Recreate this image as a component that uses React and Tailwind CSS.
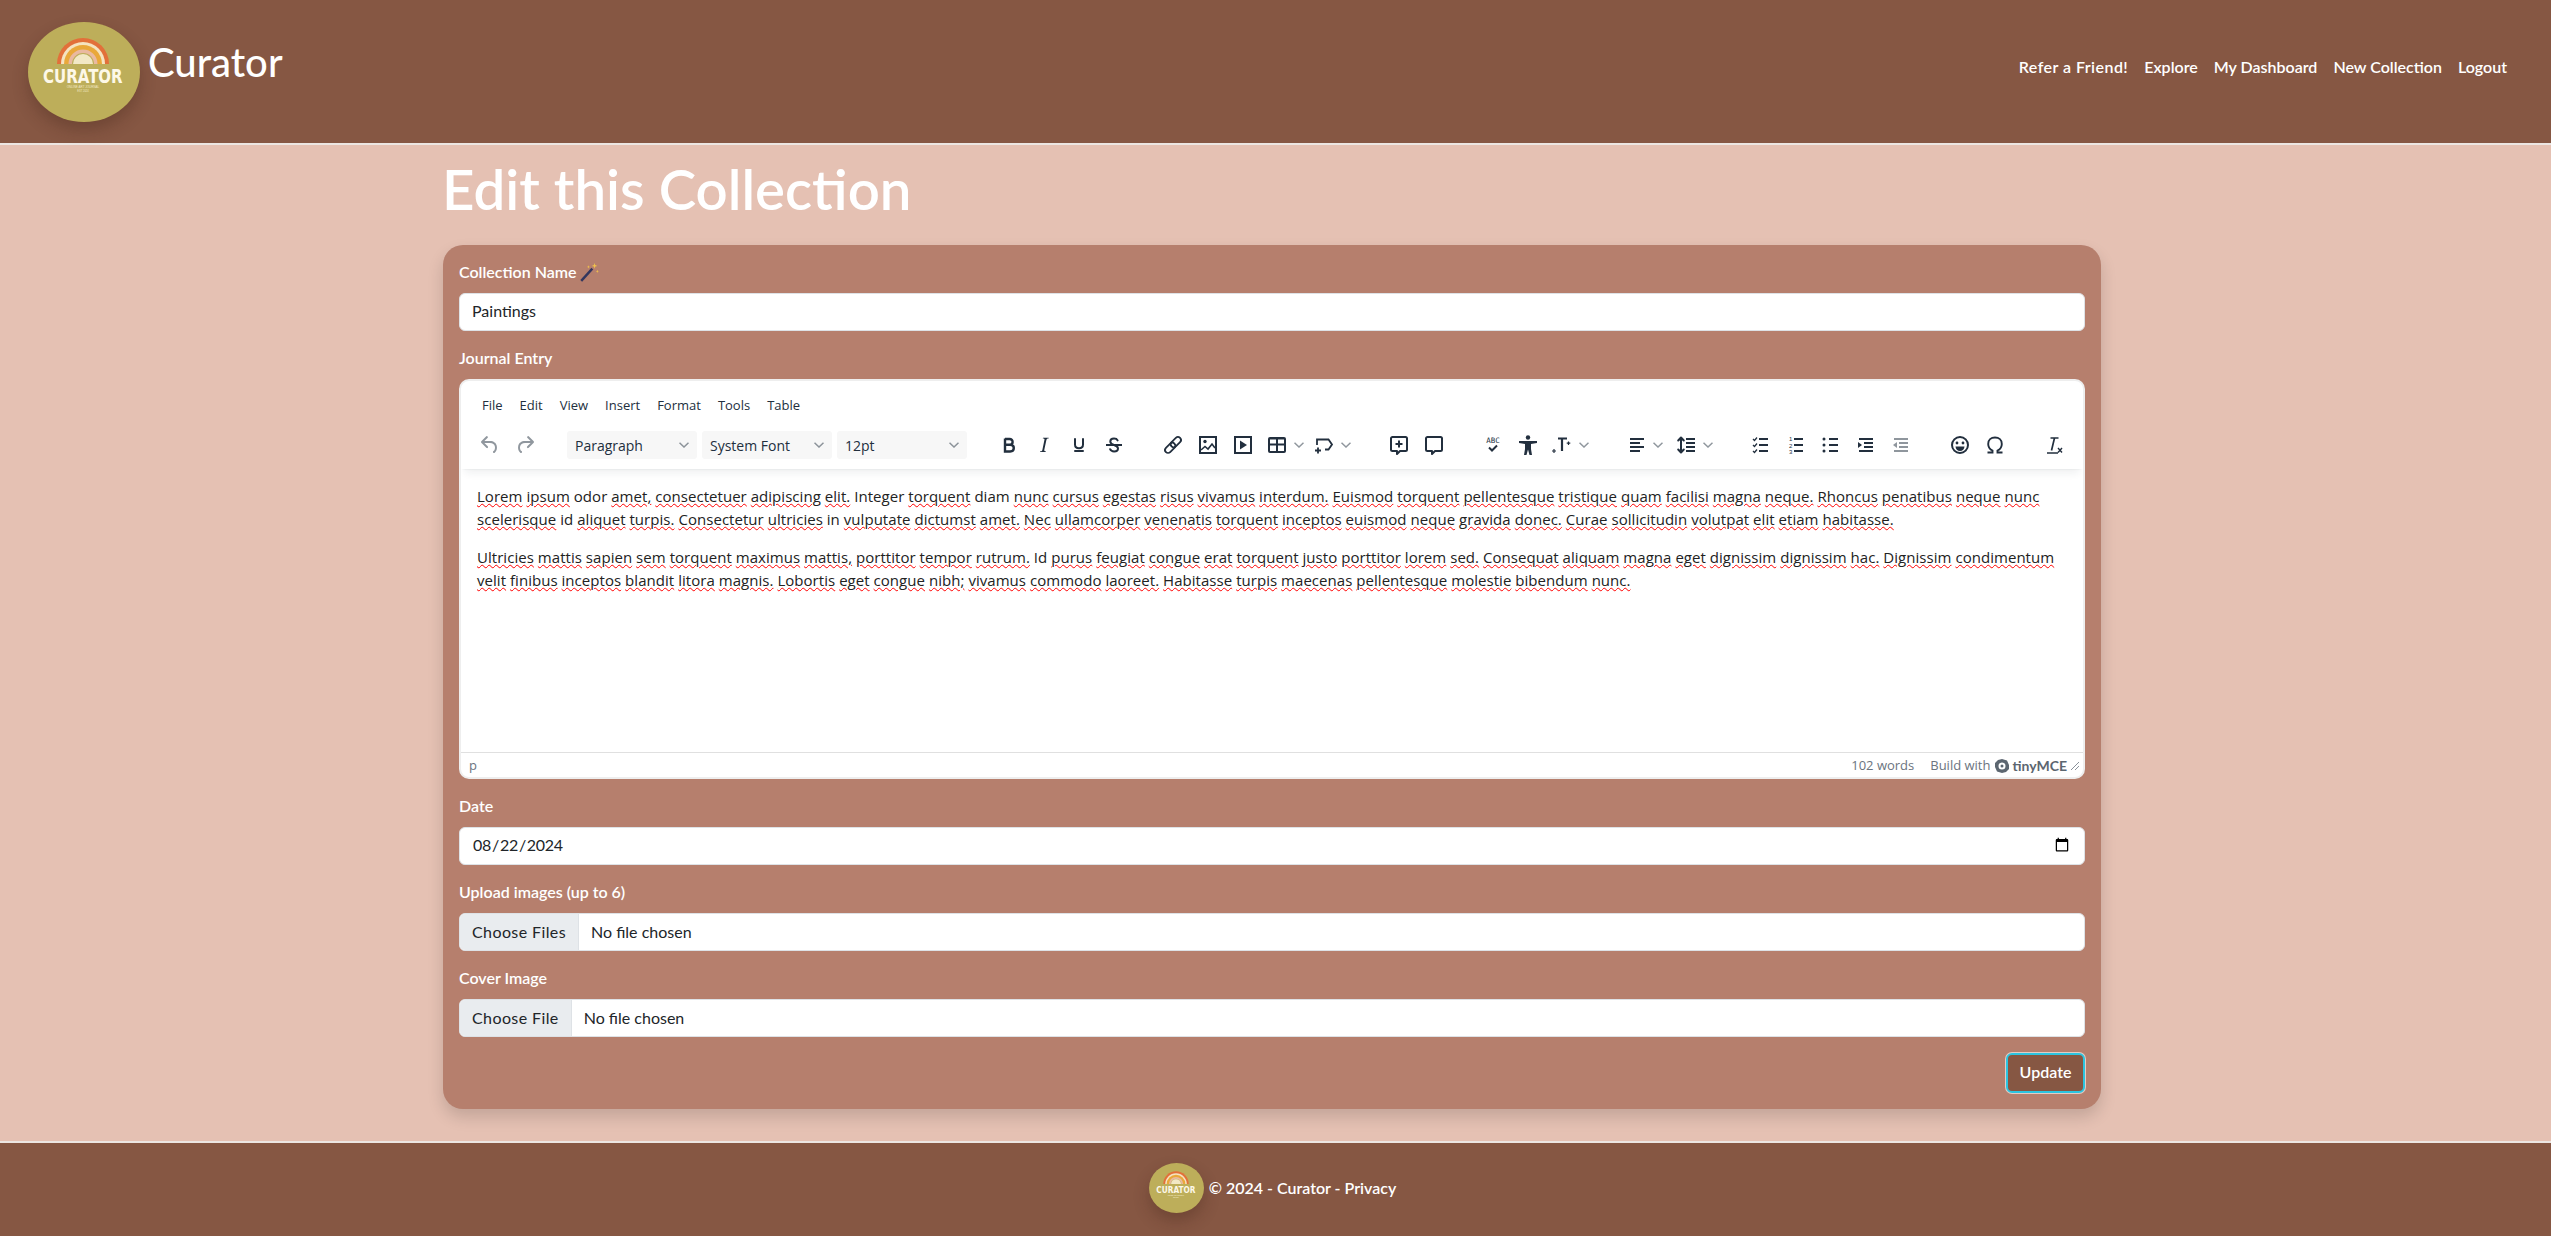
import React from "react";

const cleanWords = ["odor", "Integer", "diam", "id", "in", "Id"];

const paragraphOne = [
	"Lorem ipsum odor amet, consectetuer adipiscing elit. Integer torquent diam nunc cursus egestas risus vivamus interdum. Euismod torquent pellentesque tristique quam facilisi magna neque. Rhoncus penatibus neque nunc",
	"scelerisque id aliquet turpis. Consectetur ultricies in vulputate dictumst amet. Nec ullamcorper venenatis torquent inceptos euismod neque gravida donec. Curae sollicitudin volutpat elit etiam habitasse.",
];
const paragraphTwo = [
	"Ultricies mattis sapien sem torquent maximus mattis, porttitor tempor rutrum. Id purus feugiat congue erat torquent justo porttitor lorem sed. Consequat aliquam magna eget dignissim dignissim hac. Dignissim condimentum",
	"velit finibus inceptos blandit litora magnis. Lobortis eget congue nibh; vivamus commodo laoreet. Habitasse turpis maecenas pellentesque molestie bibendum nunc.",
];

function Logo({ className }) {
	return (
		<div className={"shrink-0 rounded-[50%] bg-[#bdae5a] shadow-[0_8px_16px_rgba(60,30,20,0.3)] " + className}>
			<svg viewBox="0 0 112 100" className="w-full h-full">
				<path d="M29 42a26 26 0 0 1 52 0Z" fill="#e2703a" />
				<path d="M33 42a22 22 0 0 1 44 0Z" fill="#f5e3c0" />
				<path d="M36 42a19 19 0 0 1 38 0Z" fill="#e9a83a" />
				<path d="M40.5 42a14.5 14.5 0 0 1 29 0Z" fill="#eab9a0" />
				<path d="M44 42a11 11 0 0 1 22 0Z" fill="#bdae5a" />
				<path d="M45 42a10 10 0 0 1 20 0Z" fill="#f2e8c5" />
				<text transform="translate(15 61) scale(1 1.3)" fontFamily="'DejaVu Sans', sans-serif" fontWeight="700" fontSize="15" fill="#fdf8e8">
					CURATOR
				</text>
				<text x="55" y="66" textAnchor="middle" fontFamily="'Liberation Sans', sans-serif" fontSize="3" fill="#f2e8c5">
					ONLINE ART JOURNAL
				</text>
				<text x="55" y="70" textAnchor="middle" fontFamily="'Liberation Sans', sans-serif" fontSize="2.6" fill="#f2e8c5">
					EST 2024
				</text>
			</svg>
		</div>
	);
}

function Icon({ children }) {
	return (
		<svg viewBox="0 0 24 24" className="w-6 h-6 text-[#222f3e]" fill="none" stroke="currentColor" strokeWidth="2">
			{children}
		</svg>
	);
}

const icons = {
	undo: (
		<g opacity="0.5">
			<path stroke="none" fill="currentColor" d="M6.4 8H12c3.7 0 6.2 2 6.8 5.1.6 2.7-.4 5.6-2.3 6.8a1 1 0 0 1-1-1.8c1.1-.6 1.8-2.7 1.4-4.6-.5-2.1-2.1-3.5-4.9-3.5H6.4l3.3 3.3a1 1 0 1 1-1.4 1.4l-5-5a1 1 0 0 1 0-1.4l5-5a1 1 0 0 1 1.4 1.4L6.4 8Z" />
		</g>
	),
	redo: (
		<g opacity="0.5">
			<path stroke="none" fill="currentColor" d="M17.6 8H12c-3.7 0-6.2 2-6.8 5.1-.6 2.7.4 5.6 2.3 6.8a1 1 0 0 0 1-1.8c-1.1-.6-1.8-2.7-1.4-4.6.5-2.1 2.1-3.5 4.9-3.5h5.6l-3.3 3.3a1 1 0 1 0 1.4 1.4l5-5a1 1 0 0 0 0-1.4l-5-5a1 1 0 0 0-1.4 1.4L17.6 8Z" />
		</g>
	),
	bold: <path strokeWidth="2.4" d="M8 5.5v13h5.2c2.2 0 3.6-1.3 3.6-3.4 0-2-1.4-3.3-3.6-3.3H8m0 0h4.6c1.9 0 3-1.1 3-2.9 0-1.7-1.1-2.9-3-2.9H8" />,
	italic: <path stroke="none" fill="currentColor" d="M16.7 4.7l-.1.9h-.3c-.6 0-1 0-1.4.3-.3.3-.4.6-.5 1.1l-2.1 9.8v.6c0 .5.4.8 1.4.8h.2l-.2.8H8l.2-.8h.2c1.1 0 1.8-.5 2-1.5l2-9.8.1-.5c0-.6-.4-.8-1.4-.8h-.3l.2-.9h5.8Z" />,
	underline: <path strokeLinecap="round" d="M8 6v5.5c0 2.4 1.7 3.7 4 3.7s4-1.3 4-3.7V6M8 18h8" />,
	strike: (
		<>
			<path strokeLinecap="round" d="M15.6 7.4C15 6.2 13.7 5.6 12 5.6c-2.2 0-3.7 1.1-3.7 2.9 0 1.5 1 2.6 3.7 3.5 3 .9 4 2 4 3.5 0 1.8-1.6 2.9-3.9 2.9-1.9 0-3.4-.8-4-2.2" />
			<path d="M4 12h16" />
		</>
	),
	link: (
		<g transform="rotate(-45 12 12)" strokeWidth="1.8">
			<rect x="2" y="9" width="12" height="6" rx="3" />
			<rect x="10" y="9" width="12" height="6" rx="3" />
		</g>
	),
	image: (
		<>
			<rect x="4" y="4" width="16" height="16" />
			<circle cx="9" cy="8.5" r="1.7" fill="currentColor" stroke="none" />
			<path strokeWidth="1.6" d="M5 17l4-3.5 3 2.5 4-5 3 4" />
		</>
	),
	media: (
		<>
			<rect x="4" y="4" width="16" height="16" />
			<path stroke="none" fill="currentColor" d="M9 7.5l7 4.5-7 4.5Z" />
		</>
	),
	table: (
		<>
			<rect x="3" y="4" width="18" height="16" rx="2" stroke="none" fill="currentColor" />
			<rect x="5" y="6.5" width="6" height="4" fill="#fff" stroke="none" />
			<rect x="13" y="6.5" width="6" height="4" fill="#fff" stroke="none" />
			<rect x="5" y="12.5" width="6" height="5.5" fill="#fff" stroke="none" />
			<rect x="13" y="12.5" width="6" height="5.5" fill="#fff" stroke="none" />
		</>
	),
	template: <path strokeWidth="1.8" d="M5 12V6.5h11.5L20 11.5l-3.5 5H13M3 17.5h6M6 14.5v6" />,
	commentAdd: (
		<>
			<path strokeLinejoin="round" d="M5.5 4h13a1.5 1.5 0 0 1 1.5 1.5v11a1.5 1.5 0 0 1-1.5 1.5H13l-3 3v-3H5.5A1.5 1.5 0 0 1 4 16.5v-11A1.5 1.5 0 0 1 5.5 4Z" />
			<path d="M12 7.5v7M8.5 11h7" />
		</>
	),
	comment: <path strokeLinejoin="round" d="M5.5 4h13a1.5 1.5 0 0 1 1.5 1.5v11a1.5 1.5 0 0 1-1.5 1.5H13l-3 3v-3H5.5A1.5 1.5 0 0 1 4 16.5v-11A1.5 1.5 0 0 1 5.5 4Z" />,
	spell: (
		<>
			<text x="12" y="10" textAnchor="middle" stroke="none" fill="currentColor" fontSize="7.5" fontFamily="'DejaVu Sans Mono', monospace">
				ABC
			</text>
			<path d="M8 14.5l3 3 5-5" />
		</>
	),
	a11y: (
		<>
			<circle cx="12" cy="4.5" r="2.2" fill="currentColor" stroke="none" />
			<path stroke="none" fill="currentColor" d="M3 8h18v2l-6 1v5l1 6h-2.5L12 16.5 10.5 22H8l1-6v-5L3 10Z" />
		</>
	),
	fontsize: (
		<>
			<path strokeWidth="2.2" d="M8 5.5h9M12 5.5V18" />
			<path strokeWidth="1.2" d="M4 16v4M2 18h4M18.5 8.5V12M16.7 10.2h3.6" />
		</>
	),
	align: <path d="M5 6h14M5 10h10M5 14h14M5 18h10" />,
	lineheight: (
		<>
			<path strokeLinecap="round" strokeLinejoin="round" d="M6 5v14M3.2 7.5L6 4.5l2.8 3M3.2 16.5L6 19.5l2.8-3" />
			<path d="M11 6h9M11 10h9M11 14h9M11 18h9" />
		</>
	),
	checklist: (
		<>
			<path d="M11 6h9M11 12h9M11 18h9" />
			<path strokeWidth="1.3" d="M5 6l1.5 1.5L9 4.5M5 12l1.5 1.5 2.5-3M5 18l1.5 1.5 2.5-3" />
		</>
	),
	numlist: (
		<>
			<path d="M11 6h9M11 12h9M11 18h9" />
			<text x="6" y="8" stroke="none" fill="currentColor" fontSize="6" fontFamily="'Liberation Sans', sans-serif">1</text>
			<text x="6" y="14.5" stroke="none" fill="currentColor" fontSize="6" fontFamily="'Liberation Sans', sans-serif">2</text>
			<text x="6" y="21" stroke="none" fill="currentColor" fontSize="6" fontFamily="'Liberation Sans', sans-serif">3</text>
		</>
	),
	bullist: (
		<>
			<path d="M11 6h9M11 12h9M11 18h9" />
			<circle cx="6" cy="6" r="1.5" fill="currentColor" stroke="none" />
			<circle cx="6" cy="12" r="1.5" fill="currentColor" stroke="none" />
			<circle cx="6" cy="18" r="1.5" fill="currentColor" stroke="none" />
		</>
	),
	indent: (
		<>
			<path d="M6 6h14M11 10h9M11 14h9M6 18h14" />
			<path stroke="none" fill="currentColor" d="M5 9l4 3-4 3Z" />
		</>
	),
	outdent: (
		<g opacity="0.5">
			<path d="M6 6h14M11 10h9M11 14h9M6 18h14" />
			<path stroke="none" fill="currentColor" d="M9 9l-4 3 4 3Z" />
		</g>
	),
	emoji: (
		<>
			<circle cx="12" cy="12" r="8" />
			<circle cx="9" cy="10" r="1.4" fill="currentColor" stroke="none" />
			<circle cx="15" cy="10" r="1.4" fill="currentColor" stroke="none" />
			<path stroke="none" fill="currentColor" d="M7.5 13.5h9c0 2.7-2 4.5-4.5 4.5s-4.5-1.8-4.5-4.5Z" />
		</>
	),
	omega: <path strokeWidth="1.9" d="M4.5 19.5h5v-2c-2.8-1.3-4.3-3.7-4.3-6.6C5.2 7.2 8 4.5 12 4.5s6.8 2.7 6.8 6.4c0 2.9-1.5 5.3-4.3 6.6v2h5" />,
	clear: (
		<>
			<path strokeWidth="1.7" d="M9.5 5h8M13.5 5l-3 12.5M6 20h11" />
			<path strokeWidth="1.4" d="M17 15l4 4.5M21 15l-4 4.5" />
		</>
	),
};

function Chevron() {
	return (
		<svg viewBox="0 0 10 6" className="w-2.5 h-1.5 text-[#222f3e]/50" fill="none" stroke="currentColor" strokeWidth="1.5">
			<path d="M.5.8 5 5 9.5.8" />
		</svg>
	);
}

function Btn({ name }) {
	return (
		<div className="w-[35px] flex items-center justify-center">
			<Icon>{icons[name]}</Icon>
		</div>
	);
}

function SplitBtn({ name, className = "" }) {
	return (
		<div className={"w-[47px] flex items-center " + className}>
			<div className="w-[33px] flex justify-center">
				<Icon>{icons[name]}</Icon>
			</div>
			<Chevron />
		</div>
	);
}

function SelectBox({ label }) {
	return (
		<div className="w-[130px] h-7 mr-[5px] px-2 bg-[#f7f7f7] rounded-[3px] flex items-center justify-between text-[14px] text-[#222f3e]">
			{label}
			<Chevron />
		</div>
	);
}

function Line({ text }) {
	return (
		<span className="block whitespace-nowrap">
			{text.split(" ").map((word, i) => (
				<React.Fragment key={i}>
					{cleanWords.includes(word) ? (
						word
					) : (
						<span className="underline decoration-wavy decoration-[#ff0000] decoration-1 underline-offset-1">{word}</span>
					)}{" "}
				</React.Fragment>
			))}
		</span>
	);
}

function Editor() {
	return (
		<div className="h-[400px] mb-4 bg-white border-2 border-[#eeeeee] rounded-[10px] overflow-hidden flex flex-col font-['Open_Sans',sans-serif]">
			<div className="h-[88px] shrink-0 shadow-[0_2px_2px_-2px_rgba(34,47,62,0.1),0_8px_8px_-4px_rgba(34,47,62,0.07)] z-10 pl-[11px]">
				<div className="flex gap-[17px] pt-[14px] pl-[10px] h-[38px] text-[13px] leading-[20px] text-[#222f3e]">
					<span>File</span>
					<span>Edit</span>
					<span>View</span>
					<span>Insert</span>
					<span>Format</span>
					<span>Tools</span>
					<span>Table</span>
				</div>
				<div className="flex h-7 mt-[12px]">
					<div className="flex mr-[25px]">
						<Btn name="undo" />
						<Btn name="redo" />
					</div>
					<div className="flex mr-[19.5px]">
						<SelectBox label="Paragraph" />
						<SelectBox label="System Font" />
						<SelectBox label="12pt" />
					</div>
					<div className="flex mr-[24px]">
						<Btn name="bold" />
						<Btn name="italic" />
						<Btn name="underline" />
						<Btn name="strike" />
					</div>
					<div className="flex mr-[27px]">
						<Btn name="link" />
						<Btn name="image" />
						<Btn name="media" />
						<SplitBtn name="table" />
						<SplitBtn name="template" />
					</div>
					<div className="flex mr-[24px]">
						<Btn name="commentAdd" />
						<Btn name="comment" />
					</div>
					<div className="flex mr-[27.5px]">
						<Btn name="spell" />
						<Btn name="a11y" />
						<SplitBtn name="fontsize" />
					</div>
					<div className="flex mr-[25px]">
						<SplitBtn name="align" className="mr-[3px]" />
						<SplitBtn name="lineheight" />
					</div>
					<div className="flex mr-[25px]">
						<Btn name="checklist" />
						<Btn name="numlist" />
						<Btn name="bullist" />
						<Btn name="indent" />
						<Btn name="outdent" />
					</div>
					<div className="flex mr-[23.5px]">
						<Btn name="emoji" />
						<Btn name="omega" />
					</div>
					<Btn name="clear" />
				</div>
			</div>
			<div className="flex-1 px-4 pt-4 text-[15px] leading-[23px] tracking-[0.04px] text-[#222222]">
				<p className="mb-[15px]">
					{paragraphOne.map((line) => (
						<Line key={line} text={line} />
					))}
				</p>
				<p>
					{paragraphTwo.map((line) => (
						<Line key={line} text={line} />
					))}
				</p>
			</div>
			<div className="h-[25px] shrink-0 border-t border-[#e0e0e0] pl-2 pr-[3px] pt-px flex items-center justify-between text-[13px] text-[#6b7480]">
				<span>p</span>
				<div className="flex items-center">
					<span className="mr-4">102 words</span>
					<span>Build with</span>
					<svg viewBox="0 0 14 14" className="w-[14px] h-[14px] ml-[5px] mr-[3px]">
						<path fill="#5c6670" fillRule="evenodd" d="M7 0l5 1.5 2 4.5v4l-3 3-4 1-5-1.5L0 8V4l3-3Zm0 3.5a3.5 3.5 0 1 0 0 7 3.5 3.5 0 0 0 0-7Z" />
						<circle cx="7" cy="7" r="1.5" fill="#5c6670" />
					</svg>
					<span className="font-bold text-[14px] text-[#5c6670] font-['Lato',sans-serif]">tinyMCE</span>
					<svg viewBox="0 0 10 10" className="w-2.5 h-2.5 ml-[3px]" stroke="#8a929b" strokeWidth="1">
						<path d="M1 9l8-8M5 9l4-4" />
					</svg>
				</div>
			</div>
		</div>
	);
}

function Label({ children }) {
	return <label className="flex h-6 mb-2 pb-[3px] items-center text-[16px] font-semibold text-white">{children}</label>;
}

const inputClass = "block w-full h-[38px] mb-4 px-3 pb-[3px] bg-white border border-[#dee2e6] rounded-md text-[16px] text-[#212529]";
const fileClass = "block w-full h-[38px] mb-4 pr-3 bg-white border border-[#dee2e6] rounded-md text-[16px] text-[#212529] file:h-full file:px-3 file:mr-3 file:tracking-[0.4px] file:bg-[#e9ecef] file:text-[#212529] file:border-0 file:border-r file:border-solid file:border-[#dee2e6]";

export default function App() {
	return (
		<div className="min-h-[1236px] bg-[#e5c1b3] flex flex-col font-['Lato',sans-serif]">
			<header className="h-[145px] shrink-0 bg-[#865743] border-b-2 border-[#ece6e2] flex items-center justify-between pl-7 pr-11">
				<div className="flex items-center">
					<Logo className="w-[112px] h-[100px]" />
					<span className="ml-2 mb-[19px] text-[40px] font-medium text-white">Curator</span>
				</div>
				<nav className="flex gap-4 mb-[10px] text-[16px] font-semibold text-white">
					<a className="tracking-[0.45px]">Refer a Friend!</a>
					<a>Explore</a>
					<a>My Dashboard</a>
					<a>New Collection</a>
					<a>Logout</a>
				</nav>
			</header>
			<div className="flex justify-center pr-[7px]">
				<main className="w-[1658px] mb-8">
					<h1 className="mt-[10px] mb-[23px] -ml-px text-[56.4px] leading-[67px] font-semibold text-white">Edit this Collection</h1>
					<form className="p-4 bg-[#b67f6d] rounded-[20px] shadow-[0_8px_16px_rgba(0,0,0,0.15)]">
						<Label>
							Collection Name
							<svg viewBox="0 0 18 18" className="w-5 h-5 ml-[2px]">
								<path d="M2 17L12 6" stroke="#33365e" strokeWidth="2.2" />
								<path d="M14 1l.6 1.8 1.9.7-1.9.6L14 6l-.6-1.9-1.9-.6 1.9-.7ZM16.5 7l.4 1 1 .4-1 .4-.4 1-.4-1-1-.4 1-.4ZM8.5 3l.4 1 1 .4-1 .4-.4 1-.4-1-1-.4 1-.4Z" fill="#f1c24b" />
							</svg>
						</Label>
						<input className={inputClass} defaultValue="Paintings" />
						<Label>Journal Entry</Label>
						<Editor />
						<Label>Date</Label>
						<input type="date" className={inputClass + " tracking-[-0.3px]"} defaultValue="2024-08-22" />
						<Label>Upload images (up to 6)</Label>
						<input type="file" multiple className={fileClass} />
						<Label>Cover Image</Label>
						<input type="file" className={fileClass} />
						<div className="flex justify-end">
							<button type="button" className="w-[79px] h-10 pb-[2px] bg-[#865743] border-2 border-[#2bc4e0] ring-1 ring-white/60 rounded-md text-[16px] font-semibold text-white">
								Update
							</button>
						</div>
					</form>
				</main>
			</div>
			<footer className="h-[96px] mt-auto bg-[#865743] border-t-2 border-[#ece6e2] flex items-center justify-center gap-[5px] pr-[6px] pb-[4px] text-[16px] font-semibold text-white">
				<Logo className="w-[55px] h-[50px]" />
				<span>© 2024 - Curator - Privacy</span>
			</footer>
		</div>
	);
}
